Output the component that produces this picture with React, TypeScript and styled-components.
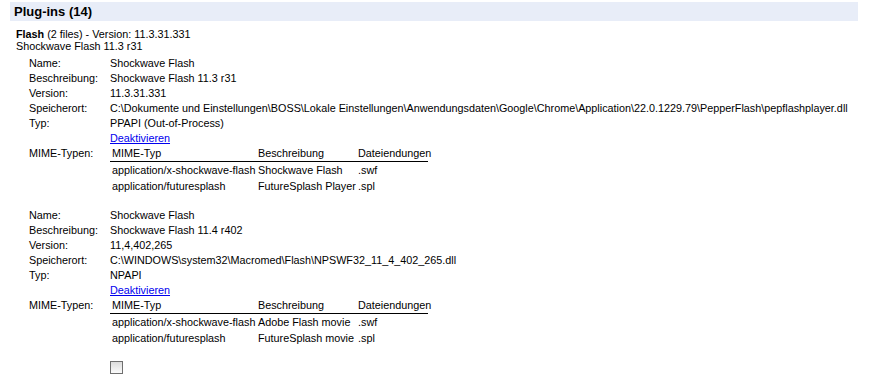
import React from 'react';
import styled, { createGlobalStyle } from 'styled-components';

interface MimeType {
  type: string;
  description: string;
  extensions: string;
}

interface PluginFile {
  name: string;
  description: string;
  version: string;
  location: string;
  type: string;
  mimeTypes: MimeType[];
}

const files: PluginFile[] = [
  {
    name: 'Shockwave Flash',
    description: 'Shockwave Flash 11.3 r31',
    version: '11.3.31.331',
    location:
      'C:\\Dokumente und Einstellungen\\BOSS\\Lokale Einstellungen\\Anwendungsdaten\\Google\\Chrome\\Application\\22.0.1229.79\\PepperFlash\\pepflashplayer.dll',
    type: 'PPAPI (Out-of-Process)',
    mimeTypes: [
      { type: 'application/x-shockwave-flash', description: 'Shockwave Flash', extensions: '.swf' },
      { type: 'application/futuresplash', description: 'FutureSplash Player', extensions: '.spl' },
    ],
  },
  {
    name: 'Shockwave Flash',
    description: 'Shockwave Flash 11.4 r402',
    version: '11,4,402,265',
    location: 'C:\\WINDOWS\\system32\\Macromed\\Flash\\NPSWF32_11_4_402_265.dll',
    type: 'NPAPI',
    mimeTypes: [
      { type: 'application/x-shockwave-flash', description: 'Adobe Flash movie', extensions: '.swf' },
      { type: 'application/futuresplash', description: 'FutureSplash movie', extensions: '.spl' },
    ],
  },
];

const GlobalStyle = createGlobalStyle`
  body {
    margin: 0;
    background: #fff;
    color: #000;
    font-family: "Liberation Sans", Arial, sans-serif;
    font-size: 10.8px;
  }
`;

const Page = styled.div`
  padding: 2px 15px 0 10px;
`;

const SectionHeader = styled.div`
  height: 19px;
  background: #e8edf8;
  padding-left: 4px;
  font-size: 13px;
  font-weight: bold;
  line-height: 19px;
`;

const Plugin = styled.div`
  padding: 7px 0 0 6px;
`;

const PluginTitle = styled.div`
  line-height: 12px;
`;

const Files = styled.div`
  padding: 4px 0 0 13px;
`;

const FileBlock = styled.div`
  & + & {
    margin-top: 14px;
  }
`;

const Details = styled.div`
  display: grid;
  grid-template-columns: 81px auto;
  line-height: 15px;
`;

const Label = styled.div``;

const Value = styled.div`
  white-space: nowrap;
`;

const Link = styled.a`
  color: #0000ee;
  text-decoration: underline;
  cursor: pointer;
`;

const MimeTable = styled.table`
  border-collapse: collapse;
  table-layout: fixed;
  width: 318px;
  font-size: 10.8px;
`;

const MimeHead = styled.th<{ $w: number }>`
  width: ${(p) => p.$w}px;
  text-align: left;
  font-weight: normal;
  padding: 0 2px;
  height: 15px;
  border-bottom: 1px solid #000;
`;

const MimeCell = styled.td`
  padding: 0 2px;
  height: 16px;
  white-space: nowrap;
  overflow: hidden;
`;

const Checkbox = styled.span`
  display: block;
  width: 11px;
  height: 11px;
  margin: 15px 0 0 81px;
  border: 1px solid #6f6f6f;
  background: linear-gradient(#dcdcdc, #fbfbfb);
`;

function File({ file }: { file: PluginFile }) {
  return (
    <FileBlock>
      <Details>
        <Label>Name:</Label>
        <Value>{file.name}</Value>
        <Label>Beschreibung:</Label>
        <Value>{file.description}</Value>
        <Label>Version:</Label>
        <Value>{file.version}</Value>
        <Label>Speicherort:</Label>
        <Value>{file.location}</Value>
        <Label>Typ:</Label>
        <Value>{file.type}</Value>
        <Label />
        <Value>
          <Link>Deaktivieren</Link>
        </Value>
        <Label>MIME-Typen:</Label>
        <Value>
          <MimeTable>
            <thead>
              <tr>
                <MimeHead $w={142}>MIME-Typ</MimeHead>
                <MimeHead $w={96}>Beschreibung</MimeHead>
                <MimeHead $w={68}>Dateiendungen</MimeHead>
              </tr>
            </thead>
            <tbody>
              {file.mimeTypes.map((m) => (
                <tr key={m.type}>
                  <MimeCell>{m.type}</MimeCell>
                  <MimeCell>{m.description}</MimeCell>
                  <MimeCell>{m.extensions}</MimeCell>
                </tr>
              ))}
            </tbody>
          </MimeTable>
        </Value>
      </Details>
    </FileBlock>
  );
}

export default function App() {
  return (
    <Page>
      <GlobalStyle />
      <SectionHeader>Plug-ins (14)</SectionHeader>
      <Plugin>
        <PluginTitle>
          <b>Flash</b> (2 files) - Version: 11.3.31.331
        </PluginTitle>
        <PluginTitle>Shockwave Flash 11.3 r31</PluginTitle>
        <Files>
          {files.map((f, i) => (
            <File key={i} file={f} />
          ))}
          <Checkbox />
        </Files>
      </Plugin>
    </Page>
  );
}
